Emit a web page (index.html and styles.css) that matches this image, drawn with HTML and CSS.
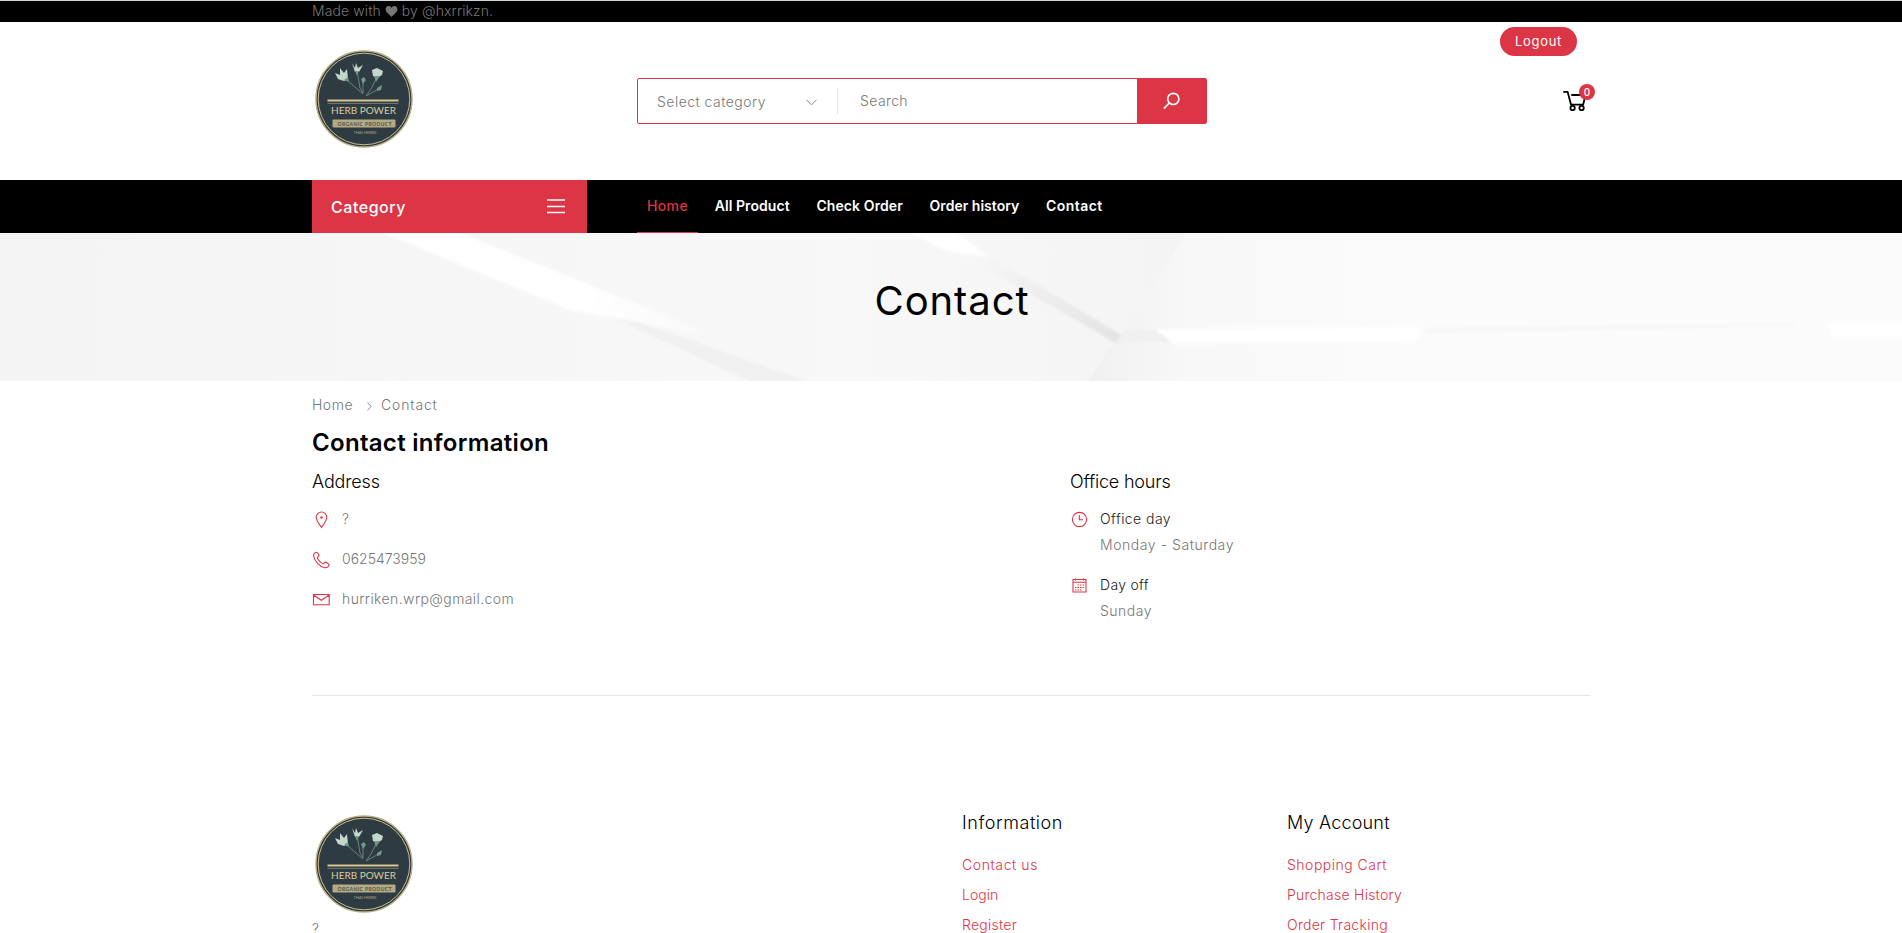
FILE: index.html
```html
<!DOCTYPE html>
<html lang="en">
<head>
<meta charset="utf-8">
<title>Contact</title>
<link rel="stylesheet" href="styles.css">
</head>
<body>
<div class="topbar"><div class="wrap"><span class="t-made">Made with <svg class="heart" viewBox="0 0 12 11"><path d="M6 11 .9 5.700C-.6 3.800.1.300 3 .1 4.500 0 5.500.900 6 1.900 6.500.900 7.500 0 9 .1c2.900.200 3.600 3.700 2.100 5.600Z"/></svg> by @hxrrikzn.</span></div></div>

<header class="header wrap">
  <svg class="logo" viewBox="0 0 98 98">
    <circle cx="49" cy="49" r="48" fill="#2e3b42" stroke="#b9ad82" stroke-width="1.4"/>
    <circle cx="49" cy="49" r="45.8" fill="none" stroke="#c9bd90" stroke-width="1"/>
    <path d="M33 31 48 44M42 20 45 38 48 43M48 31V43M62 27 56 39 51 46 60 41 65 38" fill="none" stroke="#6d8a83" stroke-width=".9"/>
    <path d="M20 23 25 25 25 18 29 23 32 19 33 29 29 31 23 29ZM37 13 40 18 41 13 43 18 48 15 44 22 40 22ZM57 20 62 18 68 21 67 25 62 28 58 26Z" fill="#c5d6cb"/>
    <path d="M29 30 33 27 34 32ZM40 21 44 21 42 26ZM59 26 65 26 61 32ZM46 29 49 27 51 30 48 34ZM62 38 67 35 66 40 62 41Z" fill="#6f9a88"/>
    <path d="M12.500 50.400H83.500" stroke="#d9c391" stroke-width="2"/>
    <path d="M12.500 53.400H83.500" stroke="#8c8a78" stroke-width=".8"/>
    <text x="16" y="64" textLength="65" class="logo-name">HERB POWER</text>
    <rect x="17.500" y="69.500" width="63" height="8" rx="1" fill="#b5aa82"/>
    <text x="22.500" y="75.600" textLength="54" class="logo-tag">ORGANIC PRODUCT</text>
    <text x="38.500" y="83.700" textLength="23" class="logo-sub">THAI HERBS</text>
  </svg>
  <form class="search">
    <span class="select"><span class="t-select">Select category</span>
      <svg width="11" height="7" viewBox="0 0 11 7"><path d="M.5.8 5.500 5.800 10.500.8"/></svg></span>
    <span class="query"><span class="t-search">Search</span></span>
    <span class="go"><svg width="17" height="18" viewBox="0 0 17 18"><circle cx="10.300" cy="6.900" r="5.600"/><path d="M6.200 11 .9 16.700"/></svg></span>
  </form>
  <div class="account">
    <a class="logout"><span class="t-logout">Logout</span></a>
    <div class="cart">
      <svg width="24" height="22" viewBox="0 0 24 22"><path d="M.3 1.800H4.600L8 14.600H20.200L22.500 5H8.300"/><circle cx="9.600" cy="18" r="2.200"/><circle cx="18.600" cy="18" r="2.200"/></svg>
      <span class="badge">0</span>
    </div>
  </div>
</header>

<nav class="nav"><div class="wrap nav-row">
  <div class="category"><span class="t-cat">Category</span><svg width="18" height="15" viewBox="0 0 18 15"><path d="M0 1H18M0 7.500H18M0 13.500H18"/></svg></div>
  <ul class="menu">
    <li class="active"><span class="t-home">Home</span></li>
    <li><span class="t-all">All Product</span></li>
    <li><span class="t-check">Check Order</span></li>
    <li><span class="t-hist">Order history</span></li>
    <li><span class="t-cont">Contact</span></li>
  </ul>
</div></nav>

<section class="banner">
  <svg class="banner-art" viewBox="0 0 1902 148" preserveAspectRatio="none">
    <defs>
      <linearGradient id="wall"><stop offset="0" stop-color="#f4f4f4"/><stop offset=".45" stop-color="#f8f8f8"/><stop offset=".62" stop-color="#f4f4f5"/></linearGradient>
      <linearGradient id="right"><stop offset="0" stop-color="#f0f0f2"/><stop offset=".12" stop-color="#f8f8f8"/><stop offset=".4" stop-color="#fbfbfb"/></linearGradient>
      <linearGradient id="beam"><stop offset="0" stop-color="#fff"/><stop offset=".6" stop-color="#fff"/><stop offset="1" stop-color="#fff" stop-opacity="0"/></linearGradient>
      <linearGradient id="shade" x1="0" y1="0" x2="1" y2="1"><stop offset="0" stop-color="#f8f8f8"/><stop offset="1" stop-color="#e2e2e3"/></linearGradient>
      <filter id="soft"><feGaussianBlur stdDeviation="1.500"/></filter>
    </defs>
    <rect width="1902" height="148" fill="url(#wall)"/>
    <path d="M1186 0H1902V148H1088L1114 109 1126 96Z" fill="url(#right)"/>
    <g filter="url(#soft)">
      <path d="M590 74 630 86 810 149H752Z" fill="#f0f0f0"/>
      <path d="M374-4H450L728 107 680 98 570 77Z" fill="url(#beam)"/>
      <path d="M960 20 988 22 1130 107 1116 110Z" fill="url(#shade)"/>
      <path d="M904-4H952L990 24 946 18Z" fill="#fff"/>
      <path d="M1126 96 1155 97 1174 109 1116 109Z" fill="#f0f0f0"/>
      <path d="M1155 96 1419 94V108L1174 111Z" fill="#fff"/>
      <path d="M1425 95 1795 90V93L1425 100Z" fill="#f6f6f6"/>
      <path d="M1826 89H1910V104H1832Z" fill="#fff"/>
    </g>
  </svg>
  <h1><span class="t-title">Contact</span></h1>
</section>

<main class="wrap">
  <div class="crumbs"><span class="t-c1">Home</span><svg width="5" height="9" viewBox="0 0 5 9"><path d="M.5.8 4.300 4.500.5 8.200"/></svg><span class="t-c2">Contact</span></div>
  <h2><span class="t-h2">Contact information</span></h2>
  <div class="cols">
    <div class="col">
      <h3><span class="t-addr">Address</span></h3>
      <ul class="info">
        <li><svg viewBox="0 0 18 18"><path d="M9.500 16.500C7 12.800 4.200 9.500 4.200 6.300a5.300 5.300 0 0 1 10.600 0C14.800 9.500 12 12.800 9.500 16.500Z"/><circle cx="9.500" cy="6.500" r=".8"/></svg><span>?</span></li>
        <li><svg viewBox="0 0 18 18"><path d="M4.600 1.200C2.300 1.800 1.200 3.400 1.700 5.400 3 10.800 7.500 15.500 12.800 16.700c2 .3 3.500-.6 4.300-2.600.1-.9-2.700-2.900-3.700-3-.9 0-1.400 1.700-2.200 1.600C9 12 6 9 5.300 6.900 5.200 6 7 5.500 7 4.600 6.900 3.600 5.600 1 4.600 1.200Z"/></svg><span class="t-phone">0625473959</span></li>
        <li><svg viewBox="0 0 18 18"><path d="M1.500 3.500H17.200V13.800H1.500ZM1.500 4 9.300 9.300 17.200 4"/></svg><span class="t-mail">hurriken.wrp@gmail.com</span></li>
      </ul>
    </div>
    <div class="col">
      <h3><span class="t-oh">Office hours</span></h3>
      <ul class="info hours">
        <li><svg viewBox="0 0 18 18"><circle cx="9.500" cy="8.500" r="7.100"/><path d="M9.300 4V8.700H13"/></svg><div><b class="t-od">Office day</b><br><span class="t-ms">Monday - Saturday</span></div></li>
        <li><svg viewBox="0 0 18 18"><path d="M3 2.500H16V15H3ZM3 5.300H16M5.500 1.500V3.500M13.500 1.500V3.500"/><path class="dots" d="M7.500 8H14M5 10.500H14M5 13H12"/></svg><div><b class="t-do">Day off</b><br><span class="t-su">Sunday</span></div></li>
      </ul>
    </div>
  </div>
</main>

<div class="wrap rule"><hr></div>

<footer class="footer wrap">
  <div class="brand">
    <svg class="logo" viewBox="0 0 98 98">
      <circle cx="49" cy="49" r="48" fill="#2e3b42" stroke="#b9ad82" stroke-width="1.4"/>
      <circle cx="49" cy="49" r="45.8" fill="none" stroke="#c9bd90" stroke-width="1"/>
      <path d="M33 31 48 44M42 20 45 38 48 43M48 31V43M62 27 56 39 51 46 60 41 65 38" fill="none" stroke="#6d8a83" stroke-width=".9"/>
      <path d="M20 23 25 25 25 18 29 23 32 19 33 29 29 31 23 29ZM37 13 40 18 41 13 43 18 48 15 44 22 40 22ZM57 20 62 18 68 21 67 25 62 28 58 26Z" fill="#c5d6cb"/>
      <path d="M29 30 33 27 34 32ZM40 21 44 21 42 26ZM59 26 65 26 61 32ZM46 29 49 27 51 30 48 34ZM62 38 67 35 66 40 62 41Z" fill="#6f9a88"/>
      <path d="M12.500 50.400H83.500" stroke="#d9c391" stroke-width="2"/>
      <path d="M12.500 53.400H83.500" stroke="#8c8a78" stroke-width=".8"/>
      <text x="16" y="64" textLength="65" class="logo-name">HERB POWER</text>
      <rect x="17.500" y="69.500" width="63" height="8" rx="1" fill="#b5aa82"/>
      <text x="22.500" y="75.600" textLength="54" class="logo-tag">ORGANIC PRODUCT</text>
      <text x="38.500" y="83.700" textLength="23" class="logo-sub">THAI HERBS</text>
    </svg>
    <p>?</p>
  </div>
  <div class="links"><h3><span class="t-inf">Information</span></h3>
    <a><span class="t-l1">Contact us</span></a><a><span class="t-l2">Login</span></a><a><span class="t-l3">Register</span></a></div>
  <div class="links"><h3><span class="t-acc">My Account</span></h3>
    <a><span class="t-l4">Shopping Cart</span></a><a><span class="t-l5">Purchase History</span></a><a><span class="t-l6">Order Tracking</span></a></div>
</footer>
</body>
</html>
```
FILE: styles.css
```css
* { box-sizing: border-box; }
html, body { margin: 0; height: 933px; overflow: hidden; }
body { font: 300 14px/26px Inter, "Open Sans", sans-serif; color: #777; background: #fff; }
ul, h1, h2, h3, p { margin: 0; padding: 0; list-style: none; }
span, b { white-space: nowrap; }
svg { flex: none; }
.wrap { padding-left: 312px; padding-right: 311px; }

/* tracking */
.t-made { letter-spacing: .1px; }
.t-select { letter-spacing: .47px; }
.t-search { letter-spacing: .39px; }
.t-logout { letter-spacing: .69px; }
.t-cat { letter-spacing: .53px; }
.t-home { letter-spacing: .36px; }
.t-all { letter-spacing: .07px; }
.t-check { letter-spacing: .1px; }
.t-hist { letter-spacing: .02px; }
.t-cont { letter-spacing: .45px; }
.t-title { letter-spacing: .93px; }
.t-c1 { letter-spacing: .5px; }
.t-c2 { letter-spacing: .85px; }
.t-h2 { letter-spacing: .3px; }
.t-addr { letter-spacing: -.15px; }
.t-mail { letter-spacing: .4px; }
.t-oh { letter-spacing: -.2px; }
.t-od { letter-spacing: .43px; }
.t-ms { letter-spacing: .56px; }
.t-do { letter-spacing: .31px; }
.t-su { letter-spacing: .5px; }
.t-inf { letter-spacing: .56px; }
.t-l1 { letter-spacing: .59px; }
.t-l3 { letter-spacing: .26px; }
.t-acc { letter-spacing: .2px; }
.t-l4 { letter-spacing: .5px; }
.t-l5 { letter-spacing: .24px; }
.t-l6 { letter-spacing: .29px; }

.topbar { height: 22px; background: #000; border-top: 1px solid #cfd6d6; line-height: 20px; }
.heart { width: 13px; height: 11px; fill: #777; vertical-align: -1px; }
.header { height: 158px; display: flex; align-items: flex-start; }
.logo { width: 98px; height: 98px; margin: 27.500px 0 0 3px; display: block; }
.logo-name { font: 400 10px Lato, sans-serif; fill: #d8cba0; }
.logo-tag { font: 700 5px Lato, sans-serif; fill: #4c5350; }
.logo-sub { font: 400 4px Lato, sans-serif; fill: #a9a68c; }
.search { display: flex; width: 570px; height: 46px; margin: 56px 0 0 224px; border: 1px solid #dc3545; border-radius: 2px; }
.select { width: 200px; display: flex; align-items: center; justify-content: space-between; padding: 2px 20px 0 19px; margin: 9px 0; border-right: 1px solid #e4e4e4; }
.select svg { fill: none; stroke: #888; }
.query { flex: 1; padding: 9px 0 0 22px; }
.go { width: 69px; background: #dc3545; display: flex; align-items: center; justify-content: center; }
.go svg { fill: none; stroke: #fff; stroke-width: 1.700; }
.account { margin-left: auto; display: flex; flex-direction: column; align-items: flex-end; }
.logout { margin: 5px 14px 0 0; width: 77px; height: 29px; border-radius: 15px; background: #dc3545; color: #fff; font-size: 13px; font-weight: 400; line-height: 29px; padding-left: 15px; }
.cart { position: relative; margin: 34px 4px 0 0; height: 22px; }
.cart svg { display: block; fill: none; stroke: #000; stroke-width: 1.800; }
.badge { position: absolute; left: 16px; top: -6.500px; width: 16px; height: 16px; border-radius: 50%; background: #dc3545; color: #fff; font-size: 10px; font-weight: 500; line-height: 16px; text-align: center; }
.nav { height: 53px; background: #000; color: #fff; }
.nav-row { display: flex; height: 53px; }
.category { width: 275px; background: #dc3545; display: flex; align-items: center; justify-content: space-between; padding: 0 22px 0 19px; font-size: 16px; font-weight: 500; }
.category svg { stroke: #fff; stroke-width: 1.500; }
.menu { display: flex; margin-left: 50px; font-weight: 600; line-height: 52px; gap: 6.700px; }
.menu li { padding: 0 10px; height: 53px; }
.menu .active { color: #dc3545; border-bottom: 1px solid #dc3545; font-weight: 500; }
.banner { height: 148px; display: grid; overflow: hidden; }
.banner-art, .banner h1 { grid-area: 1 / 1; }
.banner-art { width: 100%; height: 148px; }
.banner h1 { z-index: 1; text-align: center; color: #000; font-size: 40px; font-weight: 400; line-height: 48px; padding: 44px 0 0 2px; }
.crumbs { display: flex; align-items: center; height: 24px; margin-top: 12px; }
.crumbs svg { margin: 2px 9px 0 14px; fill: none; stroke: #888; }
h2 { color: #000; font-size: 24px; font-weight: 600; line-height: 30px; margin-top: 11px; }
h3 { color: #000; font-size: 18px; font-weight: 350; line-height: 24px; }
.cols { display: grid; grid-template-columns: 758px 1fr; margin-top: 12px; }
.info { margin-top: 12px; }
.info li { display: flex; gap: 12px; margin-bottom: 14px; }
.info svg { width: 18px; height: 18px; margin-top: 4.500px; fill: none; stroke: #dc3545; stroke-width: 1.100; }
.info b { font-weight: 300; color: #222; }
.info .dots { stroke-dasharray: 1.500 1; }
.rule { padding-top: 57px; }
hr { margin: 0; border: 0; height: 1px; background: #e6e6e6; }
.footer { display: grid; grid-template-columns: 650px 325px 1fr; }
.footer .logo { margin-top: 118.500px; }
.footer p { margin-top: 3px; }
.links { display: flex; flex-direction: column; padding-top: 115px; }
.links a { color: #dc3545; line-height: 30px; }
.links h3 { margin-bottom: 15px; }
```
